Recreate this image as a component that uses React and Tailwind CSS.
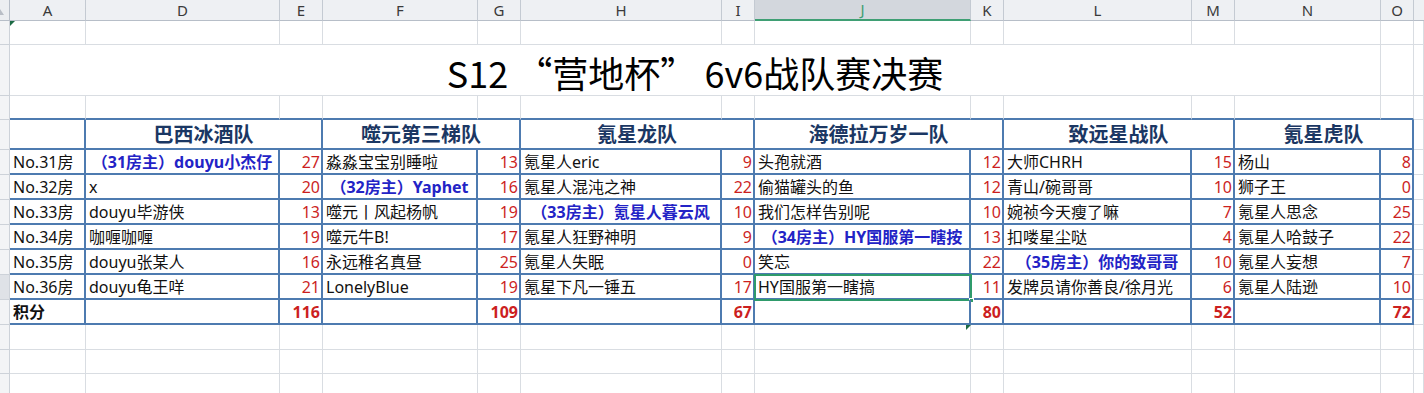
const COLS =
  'grid grid-cols-[10px_76px_194px_43px_155px_43px_201px_33px_216px_33px_188px_43px_146px_33px_10px]'

const GRAY = 'border-r border-b border-[#d9dde2]'
const BLUE = 'border-r-2 border-b-2 border-[#4e7bb0]'
const HDR = 'bg-[#f3f4f6] border-r border-b border-[#cdd2d9]'

const teams = [
  {
    name: '巴西冰酒队',
    total: 116,
    players: [
      ['（31房主）douyu小杰仔', 27, true],
      ['x', 20],
      ['douyu毕游侠', 13],
      ['咖喱咖喱', 19],
      ['douyu张某人', 16],
      ['douyu龟王咩', 21],
    ],
  },
  {
    name: '噬元第三梯队',
    total: 109,
    players: [
      ['淼淼宝宝别睡啦', 13],
      ['（32房主）Yaphet', 16, true],
      ['噬元丨风起杨帆', 19],
      ['噬元牛B!', 17],
      ['永远稚名真昼', 25],
      ['LonelyBlue', 19],
    ],
  },
  {
    name: '氪星龙队',
    total: 67,
    players: [
      ['氪星人eric', 9],
      ['氪星人混沌之神', 22],
      ['（33房主）氪星人暮云风', 10, true],
      ['氪星人狂野神明', 9],
      ['氪星人失眠', 0],
      ['氪星下凡一锤五', 17],
    ],
  },
  {
    name: '海德拉万岁一队',
    total: 80,
    players: [
      ['头孢就酒', 12],
      ['偷猫罐头的鱼', 12],
      ['我们怎样告别呢', 10],
      ['（34房主）HY国服第一瞎按', 13, true],
      ['笑忘', 22],
      ['HY国服第一瞎搞', 11],
    ],
  },
  {
    name: '致远星战队',
    total: 52,
    players: [
      ['大师CHRH', 15],
      ['青山/碗哥哥', 10],
      ['婉祯今天瘦了嘛', 7],
      ['扣喽星尘哒', 4],
      ['（35房主）你的致哥哥', 10, true],
      ['发牌员请你善良/徐月光', 6],
    ],
  },
  {
    name: '氪星虎队',
    total: 72,
    players: [
      ['杨山', 8],
      ['狮子王', 0],
      ['氪星人思念', 25],
      ['氪星人哈鼓子', 22],
      ['氪星人妄想', 7],
      ['氪星人陆逊', 10],
    ],
  },
]

const letters = ['A', 'D', 'E', 'F', 'G', 'H', 'I', 'J', 'K', 'L', 'M', 'N', 'O']

function BlankRow({ h, bottomBlue }) {
  return (
    <div className={`${COLS} ${h}`}>
      <div className={HDR} />
      {letters.map((l) => (
        <div
          key={l}
          className={
            bottomBlue
              ? 'border-r border-[#d9dde2] border-b-2 border-b-[#4e7bb0]'
              : GRAY
          }
        />
      ))}
      <div className={GRAY} />
    </div>
  )
}

export default function App() {
  return (
    <div className="w-[1424px] h-[393px] overflow-hidden bg-white text-[#111] font-['Noto_Sans','Noto_Sans_CJK_SC',sans-serif]">
      {/* column letters */}
      <div className={`${COLS} h-[21px]`}>
        <div className="relative bg-[#eceef1] border-r border-b border-[#b7bec8]">
          <div className="absolute left-0 top-[9px] w-0 h-0 border-t-[6px] border-t-transparent border-l-[4px] border-l-[#b9bec6]" />
        </div>
        {letters.map((l, i) => (
          <div
            key={l}
            className={
              l === 'J'
                ? 'relative flex items-center justify-center bg-[#d3d7dd] border-r border-[#c4cad2] border-b-2 border-b-[#3f9f74] text-[15px] text-[#3f9f74] leading-none'
                : 'relative flex items-center justify-center bg-[#eef0f3] border-r border-b border-[#c4cad2] border-b-[#b7bec8] text-[15px] text-[#3a3a3a] leading-none'
            }
          >
            {l}
            {i === 0 && (
              <span className="absolute -right-[6px] top-[3px] text-[9px] text-[#b5bcc6]">‹›</span>
            )}
          </div>
        ))}
        <div className="bg-[#eef0f3] border-b border-[#b7bec8]" />
      </div>

      {/* row 1 */}
      <div className="relative">
        <BlankRow h="h-[24px]" />
        <div className="absolute left-[10px] top-0 w-0 h-0 border-t-[5px] border-t-[#1d6b45] border-r-[5px] border-r-transparent" />
      </div>

      {/* title row, merged A:N */}
      <div className={`${COLS} h-[51px]`}>
        <div className={HDR} />
        <div className={`col-span-12 ${GRAY} flex items-center justify-center pt-[3px] font-['Noto_Sans_CJK_SC',sans-serif] text-[36px] text-black leading-none whitespace-pre`}>
          <span>
            S12{' '}
            <span className="inline-block w-[36px] text-right">“</span>
            营地杯
            <span className="inline-block w-[36px] text-left">”</span>
            {' '}6v6战队赛决赛
          </span>
        </div>
        <div className={GRAY} />
        <div className={GRAY} />
      </div>

      {/* row 3, top of table */}
      <BlankRow h="h-[24px]" bottomBlue />

      {/* team names */}
      <div className={`${COLS} h-[30px]`}>
        <div className={HDR} />
        <div className={BLUE} />
        {teams.map((t) => (
          <div
            key={t.name}
            className={`col-span-2 ${BLUE} flex items-center justify-center text-[20px] font-bold text-[#1b3763] leading-none font-['Noto_Sans_CJK_SC',sans-serif]`}
          >
            {t.name}
          </div>
        ))}
        <div className={GRAY} />
      </div>

      {/* players */}
      {[0, 1, 2, 3, 4, 5].map((r) => (
        <div key={r} className={`${COLS} h-[25px]`}>
          <div className={r === 5 ? 'bg-[#dfe2e7] border-r border-b border-[#cdd2d9]' : HDR} />
          <div className={`${BLUE} flex items-center pl-[3px] text-[16px] leading-none whitespace-nowrap`}>
            No.3{r + 1}房
          </div>
          {teams.map((t, ti) => {
            const [name, score, host] = t.players[r]
            const selected = ti === 3 && r === 5
            return [
              <div
                key={t.name + 'n'}
                className={`relative ${BLUE} flex items-center text-[16px] leading-none whitespace-nowrap ${
                  host ? 'justify-center font-bold text-[#2323c6]' : 'pl-[3px]'
                }`}
              >
                {name}
                {selected && (
                  <>
                    <div className="absolute -left-[1px] -top-[1px] -right-[3px] -bottom-[3px] border-2 border-[#2f9b6b]" />
                    <div className="absolute -right-[5px] -bottom-[5px] w-[5px] h-[5px] bg-[#2f9b6b] border border-white" />
                  </>
                )}
              </div>,
              <div
                key={t.name + 's'}
                className={`${BLUE} flex items-center justify-end pr-[1px] text-[16px] leading-none text-[#cc1f1f]`}
              >
                {score}
              </div>,
            ]
          })}
          <div className={GRAY} />
        </div>
      ))}

      {/* totals */}
      <div className={`${COLS} h-[25px]`}>
        <div className={HDR} />
        <div className={`${BLUE} flex items-center pl-[3px] text-[16px] font-bold leading-none`}>积分</div>
        {teams.map((t, ti) => [
          <div key={t.name + 'n'} className={`relative ${BLUE}`}>
            {ti === 3 && (
              <div className="absolute -right-[2px] -bottom-[7px] w-0 h-0 border-t-[5px] border-t-[#1d6b45] border-r-[5px] border-r-transparent z-10" />
            )}
          </div>,
          <div
            key={t.name + 's'}
            className={`${BLUE} flex items-center justify-end pr-[1px] text-[16px] font-bold leading-none text-[#cc1f1f]`}
          >
            {t.total}
          </div>,
        ])}
        <div className={GRAY} />
      </div>

      <BlankRow h="h-[25px]" />
      <BlankRow h="h-[24px]" />
      <BlankRow h="h-[25px]" />
    </div>
  )
}
